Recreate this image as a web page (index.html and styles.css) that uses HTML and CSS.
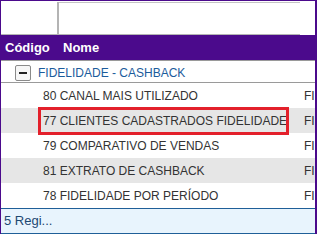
FILE: index.html
```html
<!DOCTYPE html>
<html>
<head>
<meta charset="utf-8">
<link rel="stylesheet" href="styles.css">
</head>
<body>
<div class="grid">
  <div class="filters">
    <div class="fcell fcell-code"></div>
    <div class="fcell fcell-name"></div>
  </div>
  <div class="header">
    <div class="hcell hcode">Código</div>
    <div class="hcell hname">Nome</div>
  </div>
  <div class="group">
    <span class="toggle"><span class="minus"></span></span>
    <span class="gtitle">FIDELIDADE - CASHBACK</span>
  </div>
  <div class="row"><div class="cname">80 CANAL MAIS UTILIZADO</div><div class="cgroup">FIDELIDADE</div></div>
  <div class="row alt selected"><div class="cname">77 CLIENTES CADASTRADOS FIDELIDADE</div><div class="cgroup">FIDELIDADE</div><div class="mark"></div></div>
  <div class="row"><div class="cname">79 COMPARATIVO DE VENDAS</div><div class="cgroup">FIDELIDADE</div></div>
  <div class="row alt"><div class="cname">81 EXTRATO DE CASHBACK</div><div class="cgroup">FIDELIDADE</div></div>
  <div class="row"><div class="cname">78 FIDELIDADE POR PERÍODO</div><div class="cgroup">FIDELIDADE</div></div>
  <div class="footer">5 Regi...</div>
</div>
</body>
</html>
```
FILE: styles.css
```css
html, body {
  margin: 0;
  padding: 0;
  background: #ffffff;
}
body {
  font-family: "Liberation Sans", Arial, sans-serif;
}
.grid {
  position: relative;
  width: 317px;
  box-sizing: border-box;
  border-top: 1px solid #4b0a8c;
  border-left: 1px solid #4b0a8c;
  border-right: 2px solid #4b0a8c;
  overflow: hidden;
  display: flex;
  flex-direction: column;
}
.filters {
  display: flex;
  height: 34px;
  background: #fff;
}
.fcell {
  box-sizing: border-box;
  height: 34px;
  border-top: 1px solid #c4c4c4;
  border-bottom: 2px solid #b4b4b4;
  margin-top: 1px;
}
.fcell-code {
  width: 58px;
  border-top: none;
  border-right: 2px solid #b4b4b4;
}
.fcell-name {
  width: 241px;
}
.header {
  display: flex;
  align-items: center;
  height: 25px;
  background: #4b0a8c;
  border-bottom: 1px solid #9a9a9a;
  color: #ffffff;
  font-weight: bold;
  font-size: 13px;
}
.hcode {
  width: 58px;
  padding-left: 4px;
}
.group {
  display: flex;
  align-items: center;
  height: 21px;
  border-bottom: 1px solid #9a9a9a;
}
.toggle {
  box-sizing: border-box;
  width: 16px;
  height: 16px;
  margin-left: 14px;
  margin-top: 2px;
  border: 1px solid #8a8a8a;
  border-radius: 2px;
  background: #f6f6f6;
  display: flex;
  align-items: center;
  justify-content: center;
}
.minus {
  width: 8px;
  height: 2px;
  background: #222;
}
.gtitle {
  margin-left: 7px;
  margin-top: 2px;
  font-size: 12px;
  color: #1c5c9c;
}
.row {
  position: relative;
  display: flex;
  align-items: center;
  height: 25px;
  font-size: 12px;
  color: #333;
  white-space: nowrap;
}
.row.alt {
  background: #e6e6e6;
}
.cname {
  box-sizing: border-box;
  width: 303px;
  flex: none;
  padding-left: 42px;
}
.cgroup {
  flex: none;
}
.mark {
  position: absolute;
  left: 37px;
  top: -1px;
  width: 251px;
  height: 28px;
  box-sizing: border-box;
  border: 3px solid #e3202b;
}
.footer {
  height: 24px;
  line-height: 24px;
  background: #e8f4fd;
  border-top: 1px solid #1f5f98;
  border-bottom: 1px solid #1f5f98;
  font-size: 13px;
  color: #1d4872;
  padding-left: 3px;
}
```
